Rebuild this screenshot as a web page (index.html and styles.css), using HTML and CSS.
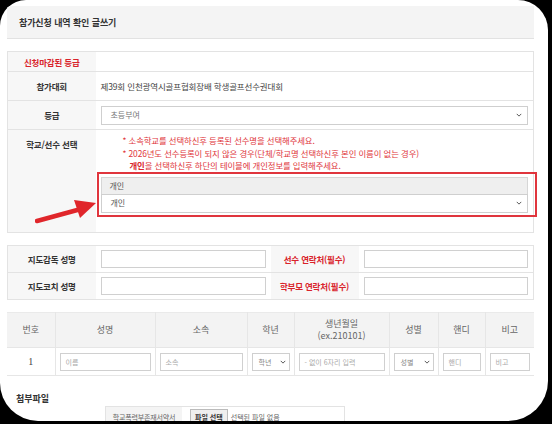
FILE: index.html
```html
<!DOCTYPE html>
<html lang="ko">
<head>
<meta charset="utf-8">
<link rel="stylesheet" href="styles.css">
</head>
<body>
<div class="screen">
  <div class="title-bar">참가신청 내역 확인 글쓰기</div>

  <table class="form t1">
    <colgroup><col class="c-label"><col></colgroup>
    <tr class="r1"><th class="red">신청마감된 등급</th><td></td></tr>
    <tr class="r2"><th>참가대회</th><td class="plain">제39회 인천광역시골프협회장배 학생골프선수권대회</td></tr>
    <tr class="r3"><th>등급</th><td><div class="sel wide"><span>초등부여</span><svg class="chev" viewBox="0 0 8 5"><path d="M1 1l3 3 3-3" fill="none" stroke="#555" stroke-width="1.3"/></svg></div></td></tr>
    <tr class="r4"><th class="top">학교/선수 선택</th><td class="top">
      <div class="notes">
        <p>* 소속학교를 선택하신후 등록된 선수명을 선택해주세요.</p>
        <p>* 2026년도 선수등록이 되지 않은 경우(단체/학교명 선택하신후 본인 이름이 없는 경우)</p>
        <p class="indent"><b>개인</b>을 선택하신후 하단의 테이블에 개인정보를 입력해주세요.</p>
      </div>
      <div class="pick">
        <div class="pick-head">개인</div>
        <div class="sel wide pick-sel"><span class="dark">개인</span><svg class="chev" viewBox="0 0 8 5"><path d="M1 1l3 3 3-3" fill="none" stroke="#555" stroke-width="1.3"/></svg></div>
      </div>
    </td></tr>
  </table>

  <table class="form t2">
    <colgroup><col class="c-label"><col class="c-in1"><col class="c-label2"><col></colgroup>
    <tr><th>지도감독 성명</th><td><div class="inp"></div></td><th class="red">선수 연락처(필수)</th><td><div class="inp"></div></td></tr>
    <tr><th>지도코치 성명</th><td><div class="inp"></div></td><th class="red">학부모 연락처(필수)</th><td><div class="inp"></div></td></tr>
  </table>

  <table class="grid t3">
    <colgroup>
      <col class="w48"><col class="w100"><col class="w92"><col class="w47">
      <col class="w95"><col class="w49"><col class="w47"><col class="w49">
    </colgroup>
    <tr class="head"><th>번호</th><th>성명</th><th>소속</th><th>학년</th><th>생년월일<br>(ex.210101)</th><th>성별</th><th>핸디</th><th>비고</th></tr>
    <tr class="row">
      <td class="num">1</td>
      <td><div class="inp sm">이름</div></td>
      <td><div class="inp sm">소속</div></td>
      <td><div class="sel sm"><span>학년</span><svg class="chev" viewBox="0 0 8 5"><path d="M1 1l3 3 3-3" fill="none" stroke="#555" stroke-width="1.3"/></svg></div></td>
      <td><div class="inp sm">- 없이 6자리 입력</div></td>
      <td><div class="sel sm"><span>성별</span><svg class="chev" viewBox="0 0 8 5"><path d="M1 1l3 3 3-3" fill="none" stroke="#555" stroke-width="1.3"/></svg></div></td>
      <td><div class="inp sm">핸디</div></td>
      <td><div class="inp sm">비고</div></td>
    </tr>
  </table>

  <div class="attach-title">첨부파일</div>
  <div class="file-row">
    <div class="file-label">학교폭력부존재서약서</div>
    <div class="file-cell"><span class="file-btn">파일 선택</span><span class="file-none">선택된 파일 없음</span></div>
  </div>

  <div class="mark-box"></div>
  <svg class="mark-arrow" viewBox="0 0 70 30" width="70" height="30">
    <path d="M2 25 L46 13" stroke="#e0262b" stroke-width="4.5" stroke-linecap="round" fill="none"/>
    <path d="M39 4 L61 7 L45 22 Z" fill="#e0262b"/>
  </svg>
</div>
</body>
</html>
```
FILE: styles.css
```css
html, body { margin: 0; padding: 0; }
body {
  background: #000;
  font-family: "Noto Sans CJK KR", "Noto Sans", sans-serif;
  color: #333;
  width: 552px;
  height: 424px;
  overflow: hidden;
}
.screen {
  position: relative;
  width: 548px;
  height: 421px;
  background: #fff;
  border-radius: 26px 30px 40px 38px;
  overflow: hidden;
  box-sizing: border-box;
  padding: 6px 14px 0 7px;
}
.title-bar {
  height: 32px;
  background: #f4f4f4;
  border-bottom: 1px solid #e2e2e2;
  display: flex;
  align-items: center;
  padding-left: 12px;
  font-size: 9px;
  font-weight: bold;
  color: #333;
  letter-spacing: -0.1px;
}
table { border-collapse: collapse; width: 527px; table-layout: fixed; }
.form { border: 1px solid #e3e3e3; }
.t1 { margin-top: 12px; }
.t2 { margin-top: 12px; }
.c-label { width: 88px; }
.c-in1 { width: 175px; }
.c-label2 { width: 88px; }
.w48 { width: 48px; }
.w100 { width: 100px; }
.w92 { width: 92px; }
.w47 { width: 47px; }
.w95 { width: 95px; }
.w49 { width: 49px; }
.form th {
  background: #f7f7f7;
  font-size: 8.5px;
  font-weight: bold;
  color: #333;
  text-align: center;
  border-bottom: 1px solid #e3e3e3;
  padding: 0;
  letter-spacing: -0.2px;
  line-height: 12px;
}
.form td {
  border-bottom: 1px solid #e3e3e3;
  padding: 0 5px;
  font-size: 8px;
  line-height: 12px;
}
.red { color: #d9232b !important; }
.t1 .r1 { height: 20px; }
.t1 .r2 { height: 29px; }
.t1 .r3 { height: 29px; }
.t1 .r4 { height: 103px; }
.plain { color: #444; font-size: 8.5px !important; letter-spacing: -0.15px; }
th.top, td.top { vertical-align: top; }
th.top { padding-top: 8px; }
td.top { padding-top: 4px; }
.notes { padding-left: 22px; color: #e0353b; font-size: 8.4px; line-height: 12.5px; letter-spacing: -0.1px; }
.notes p { margin: 0; white-space: nowrap; }
.notes .indent { padding-left: 7px; }
.notes b { color: #d8262c; }
.sel {
  display: flex;
  align-items: center;
  justify-content: space-between;
  box-sizing: border-box;
  border: 1px solid #cfcfcf;
  background: #fff;
  font-size: 8px;
  color: #777;
}
.sel.wide { height: 19px; padding: 0 5px 0 9px; }
.chev { width: 6px; height: 4px; }
.pick { margin-top: 5px; }
.pick-head {
  height: 17px;
  box-sizing: border-box;
  background: #efefef;
  border: 1px solid #d6d6d6;
  border-bottom: none;
  font-size: 8px;
  color: #555;
  display: flex;
  align-items: center;
  padding-left: 8px;
}
.pick-sel { height: 21px; }
.dark { color: #555; }
.t2 tr { height: 27px; }
.inp {
  box-sizing: border-box;
  height: 18px;
  border: 1px solid #d0d0d0;
  background: #fff;
}
.grid { margin-top: 12px; border-top: 1px solid #eaeaea; }
.grid th {
  background: #f3f3f3;
  font-weight: normal;
  color: #666;
  font-size: 9px;
  line-height: 12px;
  border-left: 1px solid #e6e6e6;
  border-bottom: 1px solid #e6e6e6;
  padding: 0;
  height: 34px;
}
.grid td {
  border-left: 1px solid #e6e6e6;
  border-bottom: 1px solid #e6e6e6;
  padding: 0 4px;
  height: 27px;
}
.grid th:first-child, .grid td:first-child { border-left: none; }
.grid td.num { text-align: center; font-size: 10px; color: #444; font-family: "Liberation Serif", serif; }
.inp.sm {
  font-size: 7px;
  color: #aaa;
  display: flex;
  align-items: center;
  padding-left: 5px;
}
.sel.sm { height: 18px; padding: 0 3px 0 6px; font-size: 7px; color: #888; }
.attach-title { margin: 17px 0 0 9px; font-size: 9px; font-weight: bold; color: #333; line-height: 12px; }
.file-row {
  display: flex;
  margin: 1px 0 0 98px;
  width: 238px;
  height: 20px;
  border: 1px solid #e3e3e3;
  border-bottom: none;
}
.file-label {
  width: 76px;
  background: #f4f4f4;
  font-size: 7px;
  color: #666;
  display: flex;
  align-items: center;
  justify-content: center;
  letter-spacing: -0.2px;
}
.file-cell { display: flex; align-items: center; padding-left: 8px; font-size: 7px; color: #666; }
.file-btn {
  border: 1px solid #bbb;
  background: #efefef;
  padding: 2px 4px;
  font-size: 7px;
  font-weight: bold;
  color: #333;
  margin-right: 3px;
}
.mark-box {
  position: absolute;
  left: 97px;
  top: 172px;
  width: 436px;
  height: 41px;
  border: 2px solid #e0353d;
}
.mark-arrow { position: absolute; left: 35px; top: 196px; }
```
